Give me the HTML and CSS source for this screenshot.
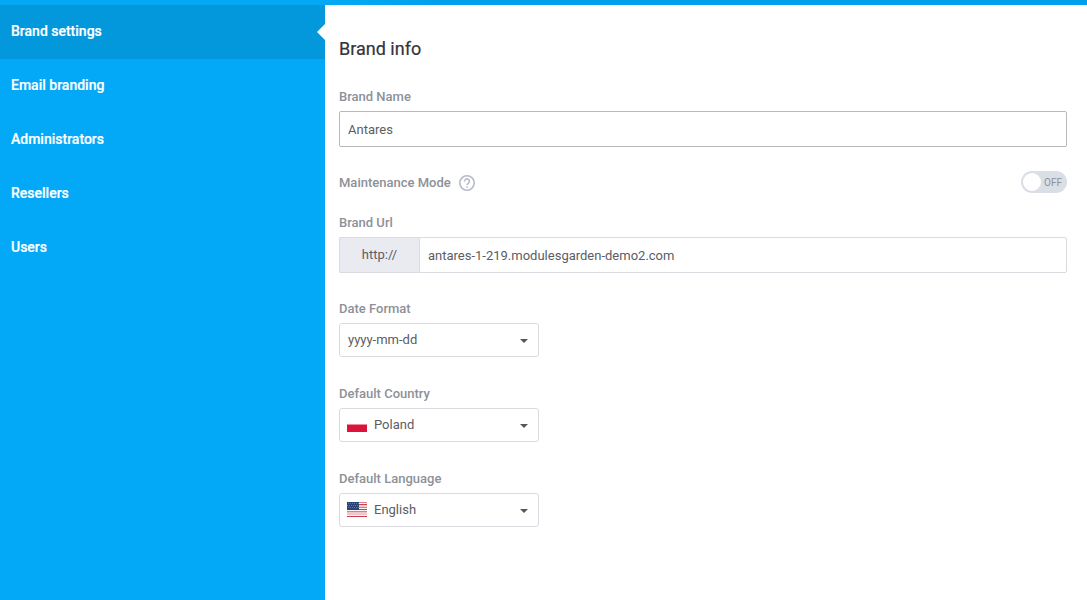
FILE: index.html
```html
<!DOCTYPE html>
<html lang="en">
<head>
<meta charset="utf-8">
<title>Brand settings</title>
<link rel="stylesheet" href="styles.css">
</head>
<body>
<div class="topbar"></div>
<div class="layout">
  <nav class="sidebar">
    <a class="nav-item active">Brand settings</a>
    <a class="nav-item">Email branding</a>
    <a class="nav-item">Administrators</a>
    <a class="nav-item">Resellers</a>
    <a class="nav-item">Users</a>
  </nav>
  <main class="content">
    <h1 class="title">Brand info</h1>
    <div class="field name-field">
      <label class="label">Brand Name</label>
      <div class="input strong">Antares</div>
    </div>
    <div class="switch-row">
      <label class="label mode-label">Maintenance Mode</label>
      <svg class="help" viewBox="0 0 16 16" width="16" height="16"><circle cx="8" cy="8" r="7.2"/><path d="M5.6 6.4a2.4 2.4 0 1 1 3.8 1.9C8.5 8.9 8 9.2 8 10.1M8 11.2v1.6"/></svg>
      <div class="switch"><span class="knob"></span><span class="off">OFF</span></div>
    </div>
    <div class="field url-field">
      <label class="label">Brand Url</label>
      <div class="group"><span class="addon">http://</span><div class="input joined">antares-1-219.modulesgarden-demo2.com</div></div>
    </div>
    <div class="field select-field">
      <label class="label">Date Format</label>
      <div class="select"><span class="value">yyyy-mm-dd</span><i class="caret"></i></div>
    </div>
    <div class="field select-field">
      <label class="label">Default Country</label>
      <div class="select"><svg class="flag" viewBox="0 0 20 15" width="20" height="15"><path fill="#fff" d="M0 0h20v7H0z"/><path fill="#dc143c" d="M0 7.5h20V15H0z"/></svg><span class="value">Poland</span><i class="caret"></i></div>
    </div>
    <div class="field select-field">
      <label class="label">Default Language</label>
      <div class="select"><svg class="flag" viewBox="0 0 20 15" width="20" height="15" shape-rendering="crispEdges"><path fill="#f1c6ca" d="M0 0h20v15H0z"/><path stroke="#c5434c" d="M0 2.5h20M0 7.5h20M0 14.5h20"/><path stroke="#dc8087" d="M0 .5h20M0 5.5h20M0 9.5h20"/><path stroke="#fbeff0" d="M0 1.5h20M0 6.5h20M0 8.5h20M0 13.5h20"/><path fill="#2b4279" d="M0 0h12v8H0z"/><path stroke="#66779f" stroke-dasharray="1 1" d="M1 1.5h11M0 3.5h11M1 5.5h11"/></svg><span class="value">English</span><i class="caret"></i></div>
    </div>
  </main>
</div>
</body>
</html>
```
FILE: styles.css
```css
* { box-sizing: border-box; }
body {
  margin: 0;
  height: 600px;
  overflow: hidden;
  display: flex;
  flex-direction: column;
  background: #fff;
  color: #5b5d63;
  font: 13px/18px Roboto, sans-serif;
}
.topbar { height: 5px; background: linear-gradient(90deg, #03a9f4 30%, #02a0ec 40%); }
.layout { flex: 1; display: flex; }
.sidebar { width: 325px; background: #03a9f7; }
.nav-item {
  display: block;
  height: 54px;
  padding: 17px 11px;
  color: #fff;
  font-size: 14px;
  font-weight: 500;
  -webkit-text-stroke: 0.2px #fff;
}
.active { position: relative; background: #0398dc; }
.active::after {
  content: "";
  position: absolute;
  right: 0;
  top: 19px;
  border: 8px solid transparent;
  border-right-color: #fff;
  border-left: 0;
}
.content { flex: 1; padding: 33px 20px 0 14px; }
.title {
  margin: 0 0 28px;
  font-size: 18px;
  line-height: 22px;
  font-weight: 400;
  color: #33343d;
  -webkit-text-stroke: 0.2px #33343d;
}
.field { display: flex; flex-direction: column; }
.name-field { margin-top: -10px; padding-top: 10px; }
.label { font-weight: 500; color: #8d9198; line-height: 18px; }
.input {
  height: 36px;
  margin-top: 5px;
  padding: 9px 8px 0;
  border: 1px solid #dadbe0;
  border-radius: 2px;
}
.strong { border-color: #b9b9bb; }
.switch-row { display: flex; align-items: center; height: 22px; margin-top: 24px; }
.mode-label { padding-top: 2px; }
.help { margin: 2px 0 0 8px; fill: none; stroke: #b6bac9; stroke-width: 1.6; }
.switch {
  margin-left: auto;
  width: 46px;
  height: 22px;
  padding: 2px;
  display: flex;
  align-items: center;
  border-radius: 11px;
  background: #dadee5;
}
.knob { width: 18px; height: 18px; border-radius: 50%; background: #fff; }
.off { margin: 2px 0 0 3px; font-size: 10px; color: #8a929b; }
.url-field { margin-top: 21px; }
.group { display: flex; margin-top: 5px; }
.addon {
  width: 80px;
  height: 36px;
  padding-top: 8px;
  text-align: center;
  background: #eaebf1;
  border: 1px solid #dadbe0;
  border-right: 0;
  border-radius: 2px 0 0 2px;
}
.joined { flex: 1; margin-top: 0; border-radius: 0 2px 2px 0; }
.select-field { margin-top: 28px; }
.url-field + .select-field { margin-top: 27px; }
.select {
  width: 200px;
  height: 34px;
  margin-top: 5px;
  padding: 0 10px 0 8px;
  display: flex;
  align-items: center;
  border: 1px solid #dadbe0;
  border-radius: 3px;
}
.flag { margin: -1px 7px 0 -1px; }
.value { margin-top: -1px; }
.caret {
  margin: 2px 0 0 auto;
  border: 4px solid transparent;
  border-top-color: #55575d;
  border-bottom: 0;
}
```
